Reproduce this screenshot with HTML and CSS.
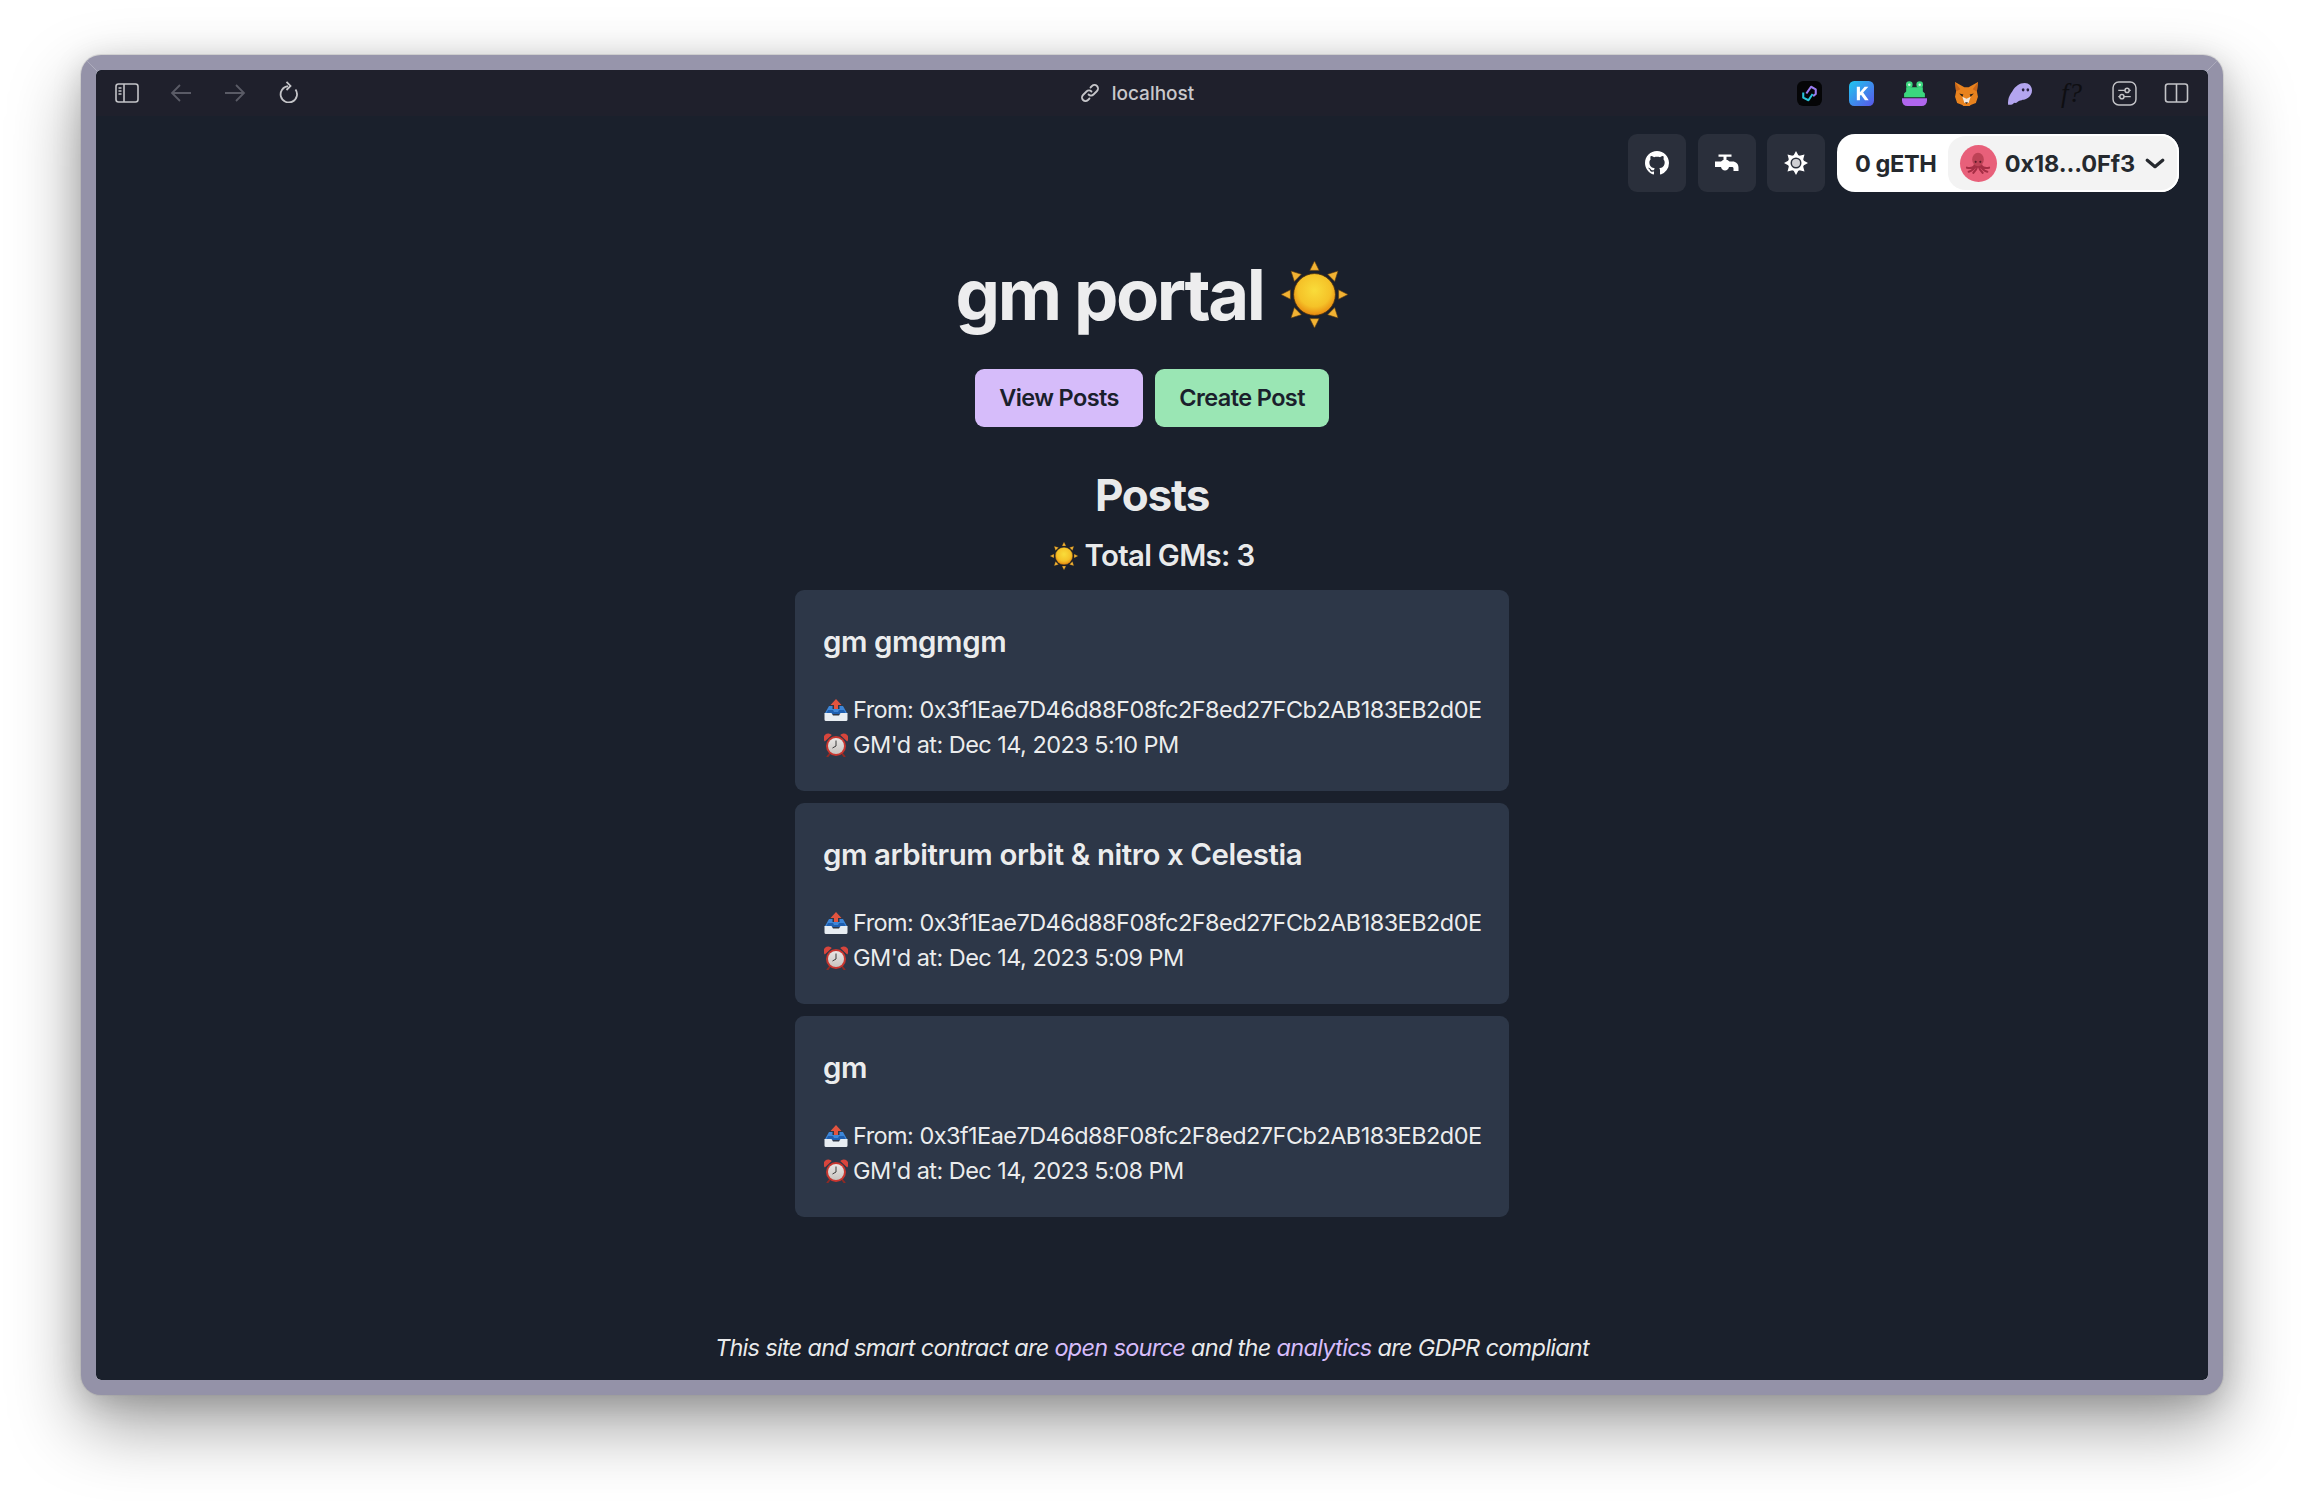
FILE: index.html
```html
<!DOCTYPE html>
<html lang="en">
<head>
    <meta charset="UTF-8">
    <meta name="viewport" content="width=device-width, initial-scale=1.0">
    <title>gm portal</title>
    <link rel="stylesheet" href="styles.css">
</head>
<body>
    <!-- Shared emoji drawings -->
    <svg class="sprite" aria-hidden="true">
        <defs>
            <radialGradient id="sunFill" cx="50%" cy="40%" r="60%">
                <stop offset="0" stop-color="#f9dc3a"/>
                <stop offset="0.65" stop-color="#f5c228"/>
                <stop offset="1" stop-color="#e8890f"/>
            </radialGradient>
            <linearGradient id="kFill" x1="0" y1="0" x2="1" y2="1">
                <stop offset="0" stop-color="#1ec8f0"/>
                <stop offset="1" stop-color="#5a55e8"/>
            </linearGradient>
            <linearGradient id="clockFill" x1="0" y1="0" x2="0" y2="1">
                <stop offset="0" stop-color="#e8e6e4"/>
                <stop offset="1" stop-color="#c9c4c0"/>
            </linearGradient>
            <symbol id="sun" viewBox="0 0 64 64">
                <g fill="#f2b233" stroke="#5a3a10" stroke-width="0.6">
                    <path d="M32 0l4.5 9h-9z"/>
                    <path d="M32 64l-4.5-9h9z"/>
                    <path d="M0 32l9-4.5v9z"/>
                    <path d="M64 32l-9 4.5v-9z"/>
                    <path d="M9.5 9.5l10 3.2-6.8 6.8z"/>
                    <path d="M54.5 9.5l-3.2 10-6.8-6.8z"/>
                    <path d="M9.5 54.5l3.2-10 6.8 6.8z"/>
                    <path d="M54.5 54.5l-10-3.2 6.8-6.8z"/>
                </g>
                <circle cx="32" cy="32" r="20" fill="url(#sunFill)" stroke="#4a3010" stroke-width="0.8"/>
            </symbol>
            <symbol id="tray" viewBox="0 0 24 24">
                <path d="M12 1l5.5 6h-3.500V12h-4V7H6.500z" fill="#e2543f"/>
                <path d="M5 8h3.500v3H15.500V8H19l4.500 8H.5z" fill="#3d86d8"/>
                <path d="M4 12h5l1 2h4l1-2h5l2 4H2z" fill="#1f5fb0"/>
                <path d="M.5 15h7l1.500 2.500h6l1.500-2.500h7v6.500a1.500 1.500 0 0 1-1.500 1.500H2a1.500 1.500 0 0 1-1.500-1.500z" fill="#e8edf2"/>
            </symbol>
            <symbol id="clock" viewBox="0 0 24 24">
                <path d="M5.500 21l-2 2.500M18.500 21l2 2.500" stroke="#8e2a24" stroke-width="2" stroke-linecap="round"/>
                <path d="M.8 8.500a4.600 4.600 0 0 1 7-6.500z" fill="#d8453c"/>
                <path d="M23.200 8.500a4.600 4.600 0 0 0-7-6.500z" fill="#d8453c"/>
                <circle cx="12" cy="13" r="10" fill="#c9362f"/>
                <circle cx="12" cy="13" r="8" fill="url(#clockFill)"/>
                <path d="M12 7.500V13l-3.500 2" fill="none" stroke="#3a3a3a" stroke-width="1"/>
            </symbol>
        </defs>
    </svg>

    <div class="window">
        <header class="toolbar">
            <div class="toolbar-left">
                <svg class="sidebar-icon" viewBox="0 0 24 20" fill="none" stroke="#c4c4c8" stroke-width="1.6">
                    <rect x="1" y="1" width="22" height="18" rx="2.5"/>
                    <path d="M9 1v18"/>
                    <path d="M3.5 5h3M3.5 8h3M3.5 11h3" stroke-width="1.4"/>
                </svg>
                <svg class="arrow-icon" viewBox="0 0 22 20" fill="none" stroke="#5a5b66" stroke-width="1.8">
                    <path d="M21 10H2M10 2l-8 8 8 8"/>
                </svg>
                <svg class="arrow-icon" viewBox="0 0 22 20" fill="none" stroke="#5a5b66" stroke-width="1.8">
                    <path d="M1 10h19M12 2l8 8-8 8"/>
                </svg>
                <svg class="reload-icon" viewBox="0 0 20 22" fill="none" stroke="#c4c4c8" stroke-width="1.8">
                    <path d="M9 5.100A8.200 8.200 0 1 0 16.500 8.500"/>
                    <path d="M7.500 .8L11.500 5l-4 4"/>
                </svg>
            </div>
            <div class="address">
                <svg class="link-icon" viewBox="0 0 20 20" fill="none" stroke="#c4c4c8" stroke-width="1.8" stroke-linecap="round">
                    <path d="M8.500 11.500a3.500 3.500 0 0 0 5 0l3.500-3.500a3.500 3.500 0 0 0-5-5L10.500 4.500"/>
                    <path d="M11.500 8.500a3.500 3.500 0 0 0-5 0L3 12a3.500 3.500 0 0 0 5 5l1.500-1.500"/>
                </svg>
                <span>localhost</span>
            </div>
            <div class="toolbar-right">
                <svg class="ext-icon" viewBox="0 0 24 24">
                    <rect width="24" height="24" rx="6" fill="#050507"/>
                    <path d="M9 12l4.500-6.500L18 8v4.500L15.500 14.500" fill="none" stroke="#9b7cf0" stroke-width="2" stroke-linejoin="round"/>
                    <path d="M6 11v5l5 2.500 4-6" fill="none" stroke="#27c4d8" stroke-width="2" stroke-linejoin="round"/>
                </svg>
                <svg class="ext-icon" viewBox="0 0 24 24">
                    <rect width="24" height="24" rx="5" fill="url(#kFill)"/>
                    <path d="M7.500 5.500h3v5.300l4.500-5.300h3.600l-5 5.600 5.300 7.400h-3.600l-3.800-5.400-1 1.100v4.300h-3z" fill="#fff"/>
                </svg>
                <svg class="ext-icon" viewBox="0 0 24 24">
                    <circle cx="7" cy="3.500" r="3.200" fill="#3bd67e"/>
                    <circle cx="17" cy="3.500" r="3.200" fill="#3bd67e"/>
                    <path d="M2 15.500v-3.500l2-2V6h16v4l2 2v3.500z" fill="#3bd67e"/>
                    <circle cx="7" cy="3.500" r="1.200" fill="#d8f7e4"/>
                    <circle cx="17" cy="3.500" r="1.200" fill="#d8f7e4"/>
                    <path d="M0 16.500h24v2.500a5 5 0 0 1-5 5H5a5 5 0 0 1-5-5z" fill="#b066ee"/>
                </svg>
                <svg class="ext-icon" viewBox="0 0 24 24">
                    <path d="M1 1l9 5h4l9-5-1 9 1 5-2 6-5 2-1 1H9l-1-1-5-2-2-6 1-5z" fill="#e8821e"/>
                    <path d="M8 15l4 2 4-2-2 6h-4z" fill="#f3e8dc"/>
                    <path d="M10.500 20.500h3L12 22z" fill="#2a2a2a"/>
                    <path d="M5 12l4 1-1 2zM19 12l-4 1 1 2z" fill="#2a2018"/>
                    <path d="M1 1l5 7-4 2zM23 1l-5 7 4 2z" fill="#c9661a"/>
                </svg>
                <svg class="ext-icon" viewBox="0 0 24 24">
                    <path d="M1 22c0-5 1-8 4-12C8 5 12 2 17 2c4 0 7 3 7 7 0 6-6 9-9 9-1 1-3 .5-4 1.500-1 .5-2 2-3 1.500-1-.5-1.500.5-3 1.500-1.500.5-4 .5-4 0z" fill="#b3a5ef"/>
                    <ellipse cx="15.500" cy="8.500" rx="1.300" ry="1.600" fill="#2a2340"/>
                    <ellipse cx="20" cy="8.500" rx="1.300" ry="1.600" fill="#2a2340"/>
                </svg>
                <span class="ext-formula">f?</span>
                <svg class="ext-icon" viewBox="0 0 24 24" fill="none" stroke="#c4c4c8" stroke-width="1.4">
                    <rect x="1" y="1" width="22" height="22" rx="5.500"/>
                    <path d="M6 9h12M6 15h12"/>
                    <circle cx="14.500" cy="9" r="2" fill="#1f202c"/>
                    <circle cx="9.500" cy="15" r="2" fill="#1f202c"/>
                </svg>
                <svg class="ext-icon split-icon" viewBox="0 0 24 20" fill="none" stroke="#c4c4c8" stroke-width="1.6">
                    <rect x="1" y="1" width="22" height="18" rx="2.500"/>
                    <path d="M12 1v18"/>
                </svg>
            </div>
        </header>

        <main class="page">
            <nav class="page-nav">
                <button class="icon-btn">
                    <svg viewBox="0 0 16 16" fill="#fff">
                        <path d="M8 0C3.580 0 0 3.580 0 8c0 3.540 2.290 6.530 5.470 7.590.4.070.55-.17.55-.38 0-.19-.01-.82-.01-1.490-2.010.37-2.530-.49-2.690-.94-.09-.23-.48-.94-.82-1.130-.28-.15-.68-.52-.01-.53.63-.01 1.080.58 1.230.82.72 1.210 1.870.87 2.330.66.070-.52.28-.87.51-1.070-1.780-.2-3.640-.89-3.640-3.950 0-.87.31-1.590.82-2.150-.08-.2-.36-1.020.08-2.120 0 0 .67-.21 2.200.82.64-.18 1.320-.27 2-.27.68 0 1.360.09 2 .27 1.530-1.040 2.200-.82 2.200-.82.44 1.100.16 1.920.08 2.120.51.56.82 1.270.82 2.150 0 3.070-1.870 3.750-3.650 3.950.29.25.54.73.54 1.480 0 1.070-.01 1.930-.01 2.200 0 .21.15.46.55.38A8.013 8.013 0 0 0 16 8c0-4.420-3.580-8-8-8z"/>
                    </svg>
                </button>
                <button class="icon-btn">
                    <svg viewBox="0 0 24 18" fill="#fff">
                        <path d="M3.500.5h13v2.200h-5V6H8.500V2.700h-5z"/>
                        <path d="M0 7.500h6L8 6h4.500l2 1.500h3c3.500 0 6 2.500 6 6V17h-5v-2.500c0-1-.7-1.500-1.500-1.500h-3c-.5 2-2 3.500-4 3.500s-3.500-1.500-4-3.500H0z"/>
                    </svg>
                </button>
                <button class="icon-btn">
                    <svg viewBox="0 0 24 24">
                        <g fill="#fff">
                            <path d="M12 0l3 5.500H9zM12 24l-3-5.500h6zM0 12l5.500-3v6zM24 12l-5.500 3V9z"/>
                            <path d="M3.500 3.500l6 1.600-4.400 4.400zM20.500 3.500l-1.600 6-4.400-4.400zM3.500 20.500l1.600-6 4.400 4.400zM20.500 20.500l-6-1.600 4.400-4.400z"/>
                            <circle cx="12" cy="12" r="8"/>
                        </g>
                        <circle cx="12" cy="12" r="5.500" fill="#2a2f3b"/>
                        <circle cx="12" cy="12" r="4" fill="#cfcfd3"/>
                    </svg>
                </button>
                <div class="wallet">
                    <span class="wallet-balance">0 gETH</span>
                    <div class="wallet-account">
                        <span class="avatar">
                            <svg viewBox="0 0 24 24">
                                <path d="M9.500 13c-.5 2.500-3 4-7 3M10 14c-1 2.500-2.500 4.500-6 5.500M11.500 14.500c-.5 2.500-1.500 4.500-3.500 6M14.500 13c.5 2.500 3 4 7 3M14 14c1 2.500 2.500 4.500 6 5.500M12.500 14.500c.5 2.500 1.500 4.500 3.500 6" fill="none" stroke="#a52d44" stroke-width="1.800" stroke-linecap="round"/>
                                <ellipse cx="12" cy="9" rx="5" ry="5.800" fill="#bd4256"/>
                                <circle cx="10" cy="11" r=".9" fill="#5a1a28"/>
                                <circle cx="14" cy="11" r=".9" fill="#5a1a28"/>
                            </svg>
                        </span>
                        <span class="wallet-address">0x18...0Ff3</span>
                        <svg class="chevron" viewBox="0 0 22 12" fill="none" stroke="#25292e" stroke-width="3.600" stroke-linecap="round" stroke-linejoin="round">
                            <path d="M2.500 2.500l8.500 7 8.500-7"/>
                        </svg>
                    </div>
                </div>
            </nav>

            <h1 class="title">gm portal <svg class="title-sun"><use href="#sun"/></svg></h1>

            <div class="tabs">
                <button class="tab tab-view">View Posts</button>
                <button class="tab tab-create">Create Post</button>
            </div>

            <h2 class="posts-heading">Posts</h2>
            <p class="total"><svg class="total-sun"><use href="#sun"/></svg> Total GMs: 3</p>

            <div class="posts">
                <article class="card">
                    <h3>gm gmgmgm</h3>
                    <p><svg class="emoji"><use href="#tray"/></svg> From: 0x3f1Eae7D46d88F08fc2F8ed27FCb2AB183EB2d0E</p>
                    <p><svg class="emoji"><use href="#clock"/></svg> GM'd at: Dec 14, 2023 5:10 PM</p>
                </article>
                <article class="card">
                    <h3>gm arbitrum orbit &amp; nitro x Celestia</h3>
                    <p><svg class="emoji"><use href="#tray"/></svg> From: 0x3f1Eae7D46d88F08fc2F8ed27FCb2AB183EB2d0E</p>
                    <p><svg class="emoji"><use href="#clock"/></svg> GM'd at: Dec 14, 2023 5:09 PM</p>
                </article>
                <article class="card">
                    <h3>gm</h3>
                    <p><svg class="emoji"><use href="#tray"/></svg> From: 0x3f1Eae7D46d88F08fc2F8ed27FCb2AB183EB2d0E</p>
                    <p><svg class="emoji"><use href="#clock"/></svg> GM'd at: Dec 14, 2023 5:08 PM</p>
                </article>
            </div>

            <footer class="footer">
                This site and smart contract are <a href="#">open source</a> and the <a href="#">analytics</a> are GDPR compliant
            </footer>
        </main>
    </div>
</body>
</html>
```

FILE: styles.css
```css
* {
    box-sizing: border-box;
}
html, body {
    height: 100%;
}
body {
    margin: 0;
    padding: 55px 81px 106px;
    background: #fff;
    font-family: Inter, "Liberation Sans", sans-serif;
    color: rgba(255,255,255,0.92);
    overflow: hidden;
}
.sprite {
    position: absolute;
    width: 0;
    height: 0;
}

/* Browser window */
.window {
    height: 100%;
    display: flex;
    flex-direction: column;
    background: #1a202c;
    border: 15px solid #9492a8;
    border-top-color: #9795ab;
    border-radius: 20px;
    box-shadow: 0 0 0 1px rgba(150,150,150,0.25), 0 30px 70px rgba(0,0,0,0.38), 0 6px 30px rgba(0,0,0,0.15);
    overflow: hidden;
    background-clip: padding-box;
}
.toolbar {
    flex: none;
    height: 46px;
    display: grid;
    grid-template-columns: 1fr auto 1fr;
    align-items: center;
    padding: 0 19px;
    background: #1f202c;
    border-radius: 8px 8px 0 0;
}
.toolbar-left {
    display: flex;
    align-items: center;
}
.toolbar-right {
    display: flex;
    align-items: center;
    justify-content: flex-end;
}
.sidebar-icon {
    width: 24px;
    height: 20px;
    margin-right: 31px;
}
.arrow-icon {
    width: 22px;
    height: 20px;
    margin-right: 32px;
}
.reload-icon {
    width: 20px;
    height: 22px;
    margin-top: -2px;
    margin-left: 1px;
}
.address {
    display: flex;
    align-items: center;
    gap: 12px;
    margin-right: 30px;
    font-size: 19px;
    font-weight: 500;
    color: #c8c8cc;
}
.link-icon {
    width: 20px;
    height: 20px;
}
.ext-icon {
    width: 25px;
    height: 25px;
    margin-left: 27.5px;
    flex: none;
}
.split-icon {
    height: 20px;
}
.ext-formula {
    width: 25px;
    margin-left: 27.5px;
    font-family: "Liberation Serif", serif;
    font-style: italic;
    font-size: 27px;
    color: #0e0e12;
    text-align: center;
}

/* Page */
.page {
    flex: 1;
    min-height: 0;
    display: flex;
    flex-direction: column;
    align-items: center;
    padding: 18px 29px 15px;
}
.page-nav {
    align-self: stretch;
    display: flex;
    justify-content: flex-end;
    gap: 11.7px;
}
.icon-btn {
    width: 58px;
    height: 58px;
    display: flex;
    align-items: center;
    justify-content: center;
    padding: 0;
    border: none;
    border-radius: 9px;
    background: #2a2f3b;
}
.icon-btn svg {
    width: 24px;
    height: 24px;
}
.wallet {
    width: 342px;
    height: 58px;
    display: flex;
    align-items: center;
    background: #fff;
    border-radius: 18px;
    color: #25292e;
    font-size: 23.5px;
    font-weight: 700;
}
.wallet-balance {
    width: 114px;
    padding-left: 18px;
    white-space: nowrap;
    letter-spacing: -0.4px;
}
.wallet-account {
    flex: 1;
    align-self: stretch;
    display: flex;
    align-items: center;
    padding: 0 12px;
    background: #f3f3f3;
    border: 2px solid #fff;
    border-left: none;
    border-radius: 18px;
}
.avatar {
    width: 37px;
    height: 37px;
    display: flex;
    align-items: center;
    justify-content: center;
    border-radius: 50%;
    background: #e8607a;
    margin-right: 8px;
}
.avatar svg {
    width: 28px;
    height: 28px;
}
.wallet-address {
    white-space: nowrap;
    letter-spacing: -0.1px;
}
.chevron {
    width: 20px;
    height: 11px;
    margin-left: 10px;
}
.title {
    margin: 60.5px 0 32px;
    display: flex;
    align-items: center;
    gap: 18px;
    font-size: 70.5px;
    line-height: 84px;
    font-weight: 700;
    letter-spacing: -2.4px;
}
.title-sun {
    width: 67px;
    height: 67px;
}
.tabs {
    display: flex;
    gap: 11.5px;
}
.tab {
    height: 58.5px;
    padding: 0 24.5px;
    border: none;
    border-radius: 9px;
    font-family: inherit;
    font-size: 23.5px;
    font-weight: 600;
    letter-spacing: -0.6px;
    color: #1a202c;
}
.tab-view {
    background: #d6bcfa;
}
.tab-create {
    background: #9ae6b4;
}
.posts-heading {
    margin: 42px 0 0;
    font-size: 44px;
    line-height: 53px;
    font-weight: 700;
    letter-spacing: -1.2px;
}
.total {
    margin: 11.5px 0 12.5px;
    display: flex;
    align-items: center;
    gap: 7px;
    font-size: 29.4px;
    line-height: 44px;
    font-weight: 600;
    letter-spacing: -0.7px;
}
.total-sun {
    width: 28px;
    height: 28px;
}
.posts {
    width: 714px;
    display: flex;
    flex-direction: column;
    gap: 12px;
}
.card {
    height: 201px;
    padding: 30px 28px;
    background: #2d3748;
    border-radius: 9px;
    font-size: 23.5px;
    line-height: 35px;
}
.card h3 {
    margin: 0 0 28px;
    font-size: 29.4px;
    line-height: 44px;
    font-weight: 600;
    letter-spacing: -0.4px;
}
.card p {
    margin: 0;
    display: flex;
    align-items: center;
    gap: 5px;
    white-space: nowrap;
    letter-spacing: -0.55px;
}
.emoji {
    width: 24px;
    height: 24px;
    margin-left: 1px;
    flex: none;
}
.footer {
    margin-top: auto;
    font-size: 23.5px;
    line-height: 35px;
    font-style: italic;
    letter-spacing: -0.7px;
}
.footer a {
    color: #d6bcfa;
    text-decoration: none;
}
```
